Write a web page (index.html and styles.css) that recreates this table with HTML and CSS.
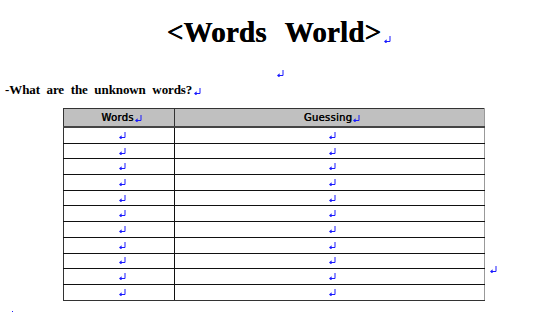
FILE: index.html
```html
<!DOCTYPE html>
<html>
<head>
<meta charset="utf-8">
<link rel="stylesheet" href="styles.css">
</head>
<body>
<div class="page">
  <div class="title"><span class="title-text">&lt;Words World&gt;</span><svg class="pm" width="7" height="7" viewBox="0 0 7 7"><path d="M6 0V5.5H2" stroke="#1a1aff" fill="none"/><path d="M0 5.5L2.6 3.2V7.8Z" fill="#1a1aff"/></svg></div>
  <div class="blank"><svg class="pm" width="7" height="7" viewBox="0 0 7 7"><path d="M6 0V5.5H2" stroke="#1a1aff" fill="none"/><path d="M0 5.5L2.6 3.2V7.8Z" fill="#1a1aff"/></svg></div>
  <div class="question">-What are the unknown words?<svg class="pm" width="7" height="7" viewBox="0 0 7 7"><path d="M6 0V5.5H2" stroke="#1a1aff" fill="none"/><path d="M0 5.5L2.6 3.2V7.8Z" fill="#1a1aff"/></svg></div>
  <div class="table-row">
    <table class="words">
      <thead>
        <tr><th class="c1">Words<svg class="pm" width="7" height="7" viewBox="0 0 7 7"><path d="M6 0V5.5H2" stroke="#1a1aff" fill="none"/><path d="M0 5.5L2.6 3.2V7.8Z" fill="#1a1aff"/></svg></th><th class="c2">Guessing<svg class="pm" width="7" height="7" viewBox="0 0 7 7"><path d="M6 0V5.5H2" stroke="#1a1aff" fill="none"/><path d="M0 5.5L2.6 3.2V7.8Z" fill="#1a1aff"/></svg></th></tr>
      </thead>
      <tbody>
        <tr><td><svg class="pm" width="7" height="7" viewBox="0 0 7 7"><path d="M6 0V5.5H2" stroke="#1a1aff" fill="none"/><path d="M0 5.5L2.6 3.2V7.8Z" fill="#1a1aff"/></svg></td><td><svg class="pm" width="7" height="7" viewBox="0 0 7 7"><path d="M6 0V5.5H2" stroke="#1a1aff" fill="none"/><path d="M0 5.5L2.6 3.2V7.8Z" fill="#1a1aff"/></svg></td></tr>
        <tr><td><svg class="pm" width="7" height="7" viewBox="0 0 7 7"><path d="M6 0V5.5H2" stroke="#1a1aff" fill="none"/><path d="M0 5.5L2.6 3.2V7.8Z" fill="#1a1aff"/></svg></td><td><svg class="pm" width="7" height="7" viewBox="0 0 7 7"><path d="M6 0V5.5H2" stroke="#1a1aff" fill="none"/><path d="M0 5.5L2.6 3.2V7.8Z" fill="#1a1aff"/></svg></td></tr>
        <tr><td><svg class="pm" width="7" height="7" viewBox="0 0 7 7"><path d="M6 0V5.5H2" stroke="#1a1aff" fill="none"/><path d="M0 5.5L2.6 3.2V7.8Z" fill="#1a1aff"/></svg></td><td><svg class="pm" width="7" height="7" viewBox="0 0 7 7"><path d="M6 0V5.5H2" stroke="#1a1aff" fill="none"/><path d="M0 5.5L2.6 3.2V7.8Z" fill="#1a1aff"/></svg></td></tr>
        <tr><td><svg class="pm" width="7" height="7" viewBox="0 0 7 7"><path d="M6 0V5.5H2" stroke="#1a1aff" fill="none"/><path d="M0 5.5L2.6 3.2V7.8Z" fill="#1a1aff"/></svg></td><td><svg class="pm" width="7" height="7" viewBox="0 0 7 7"><path d="M6 0V5.5H2" stroke="#1a1aff" fill="none"/><path d="M0 5.5L2.6 3.2V7.8Z" fill="#1a1aff"/></svg></td></tr>
        <tr><td><svg class="pm" width="7" height="7" viewBox="0 0 7 7"><path d="M6 0V5.5H2" stroke="#1a1aff" fill="none"/><path d="M0 5.5L2.6 3.2V7.8Z" fill="#1a1aff"/></svg></td><td><svg class="pm" width="7" height="7" viewBox="0 0 7 7"><path d="M6 0V5.5H2" stroke="#1a1aff" fill="none"/><path d="M0 5.5L2.6 3.2V7.8Z" fill="#1a1aff"/></svg></td></tr>
        <tr><td><svg class="pm" width="7" height="7" viewBox="0 0 7 7"><path d="M6 0V5.5H2" stroke="#1a1aff" fill="none"/><path d="M0 5.5L2.6 3.2V7.8Z" fill="#1a1aff"/></svg></td><td><svg class="pm" width="7" height="7" viewBox="0 0 7 7"><path d="M6 0V5.5H2" stroke="#1a1aff" fill="none"/><path d="M0 5.5L2.6 3.2V7.8Z" fill="#1a1aff"/></svg></td></tr>
        <tr><td><svg class="pm" width="7" height="7" viewBox="0 0 7 7"><path d="M6 0V5.5H2" stroke="#1a1aff" fill="none"/><path d="M0 5.5L2.6 3.2V7.8Z" fill="#1a1aff"/></svg></td><td><svg class="pm" width="7" height="7" viewBox="0 0 7 7"><path d="M6 0V5.5H2" stroke="#1a1aff" fill="none"/><path d="M0 5.5L2.6 3.2V7.8Z" fill="#1a1aff"/></svg></td></tr>
        <tr><td><svg class="pm" width="7" height="7" viewBox="0 0 7 7"><path d="M6 0V5.5H2" stroke="#1a1aff" fill="none"/><path d="M0 5.5L2.6 3.2V7.8Z" fill="#1a1aff"/></svg></td><td><svg class="pm" width="7" height="7" viewBox="0 0 7 7"><path d="M6 0V5.5H2" stroke="#1a1aff" fill="none"/><path d="M0 5.5L2.6 3.2V7.8Z" fill="#1a1aff"/></svg></td></tr>
        <tr><td><svg class="pm" width="7" height="7" viewBox="0 0 7 7"><path d="M6 0V5.5H2" stroke="#1a1aff" fill="none"/><path d="M0 5.5L2.6 3.2V7.8Z" fill="#1a1aff"/></svg></td><td><svg class="pm" width="7" height="7" viewBox="0 0 7 7"><path d="M6 0V5.5H2" stroke="#1a1aff" fill="none"/><path d="M0 5.5L2.6 3.2V7.8Z" fill="#1a1aff"/></svg></td></tr>
        <tr><td><svg class="pm" width="7" height="7" viewBox="0 0 7 7"><path d="M6 0V5.5H2" stroke="#1a1aff" fill="none"/><path d="M0 5.5L2.6 3.2V7.8Z" fill="#1a1aff"/></svg></td><td><svg class="pm" width="7" height="7" viewBox="0 0 7 7"><path d="M6 0V5.5H2" stroke="#1a1aff" fill="none"/><path d="M0 5.5L2.6 3.2V7.8Z" fill="#1a1aff"/></svg></td></tr>
        <tr><td><svg class="pm" width="7" height="7" viewBox="0 0 7 7"><path d="M6 0V5.5H2" stroke="#1a1aff" fill="none"/><path d="M0 5.5L2.6 3.2V7.8Z" fill="#1a1aff"/></svg></td><td><svg class="pm" width="7" height="7" viewBox="0 0 7 7"><path d="M6 0V5.5H2" stroke="#1a1aff" fill="none"/><path d="M0 5.5L2.6 3.2V7.8Z" fill="#1a1aff"/></svg></td></tr>
      </tbody>
    </table>
    <svg class="pm side-mark" width="7" height="7" viewBox="0 0 7 7"><path d="M6 0V5.5H2" stroke="#1a1aff" fill="none"/><path d="M0 5.5L2.6 3.2V7.8Z" fill="#1a1aff"/></svg>
  </div>
  <div class="foot"><span class="dot"></span></div>
</div>
</body>
</html>
```
FILE: styles.css
```css
html, body {
  margin: 0;
  padding: 0;
  background: #ffffff;
}
.page {
  width: 550px;
  height: 312px;
  overflow: hidden;
  font-family: "Liberation Serif", "Times New Roman", serif;
  color: #000;
}
.pm {
  display: inline-block;
  vertical-align: baseline;
}
.title {
  padding-top: 17px;
  height: 30px;
  line-height: 30px;
  text-align: center;
  padding-left: 8px;
  font-size: 29px;
  font-weight: bold;
}
.title-text {
  letter-spacing: 0.2px;
  word-spacing: 11px;
  text-shadow: 0.4px 0 0 #000;
}
.title .pm {
  margin-left: 3px;
  vertical-align: -1px;
}
.blank {
  height: 14px;
  padding-top: 21px;
  line-height: 7px;
  text-align: center;
  padding-left: 10px;
}
.question {
  height: 16px;
  line-height: 16px;
  padding-left: 5px;
  font-size: 13px;
  font-weight: bold;
  word-spacing: 3.5px;
  letter-spacing: -0.1px;
}
.question .pm {
  margin-left: 2px;
  vertical-align: -1px;
}
.table-row {
  margin-top: 10px;
  padding-left: 63px;
  display: flex;
  align-items: flex-end;
}
.words {
  border-collapse: collapse;
  width: 422px;
  table-layout: fixed;
  font-family: "DejaVu Sans", Verdana, sans-serif;
  font-size: 10px;
}
.words th {
  background: #c0c0c0;
  height: 17px;
  padding: 0 0 0 5px;
  font-weight: normal;
  text-shadow: 0.4px 0 0 #000;
  letter-spacing: 0.3px;
  border: 1px solid #333;
  border-bottom: 2px solid #444;
}
.words th .pm {
  margin-left: 1px;
  vertical-align: -1px;
}
.words .c1 {
  width: 105px;
}
.words td {
  height: 14.7px;
  padding: 0 0 0 6px;
  border: 1px solid #111;
  text-align: center;
  line-height: 7px;
}
.words tr > :first-child {
  border-left-color: #333;
}
.words tr > :last-child {
  border-right: 1px solid #999;
}
.words tbody tr:last-child td {
  border-bottom-color: #333;
}
.side-mark {
  margin-left: 5px;
  margin-bottom: 28px;
}
.foot {
  height: 12px;
}
.dot {
  display: block;
  width: 1px;
  height: 2px;
  background: #1a1aff;
  margin-left: 12px;
  margin-top: 10px;
}
```
